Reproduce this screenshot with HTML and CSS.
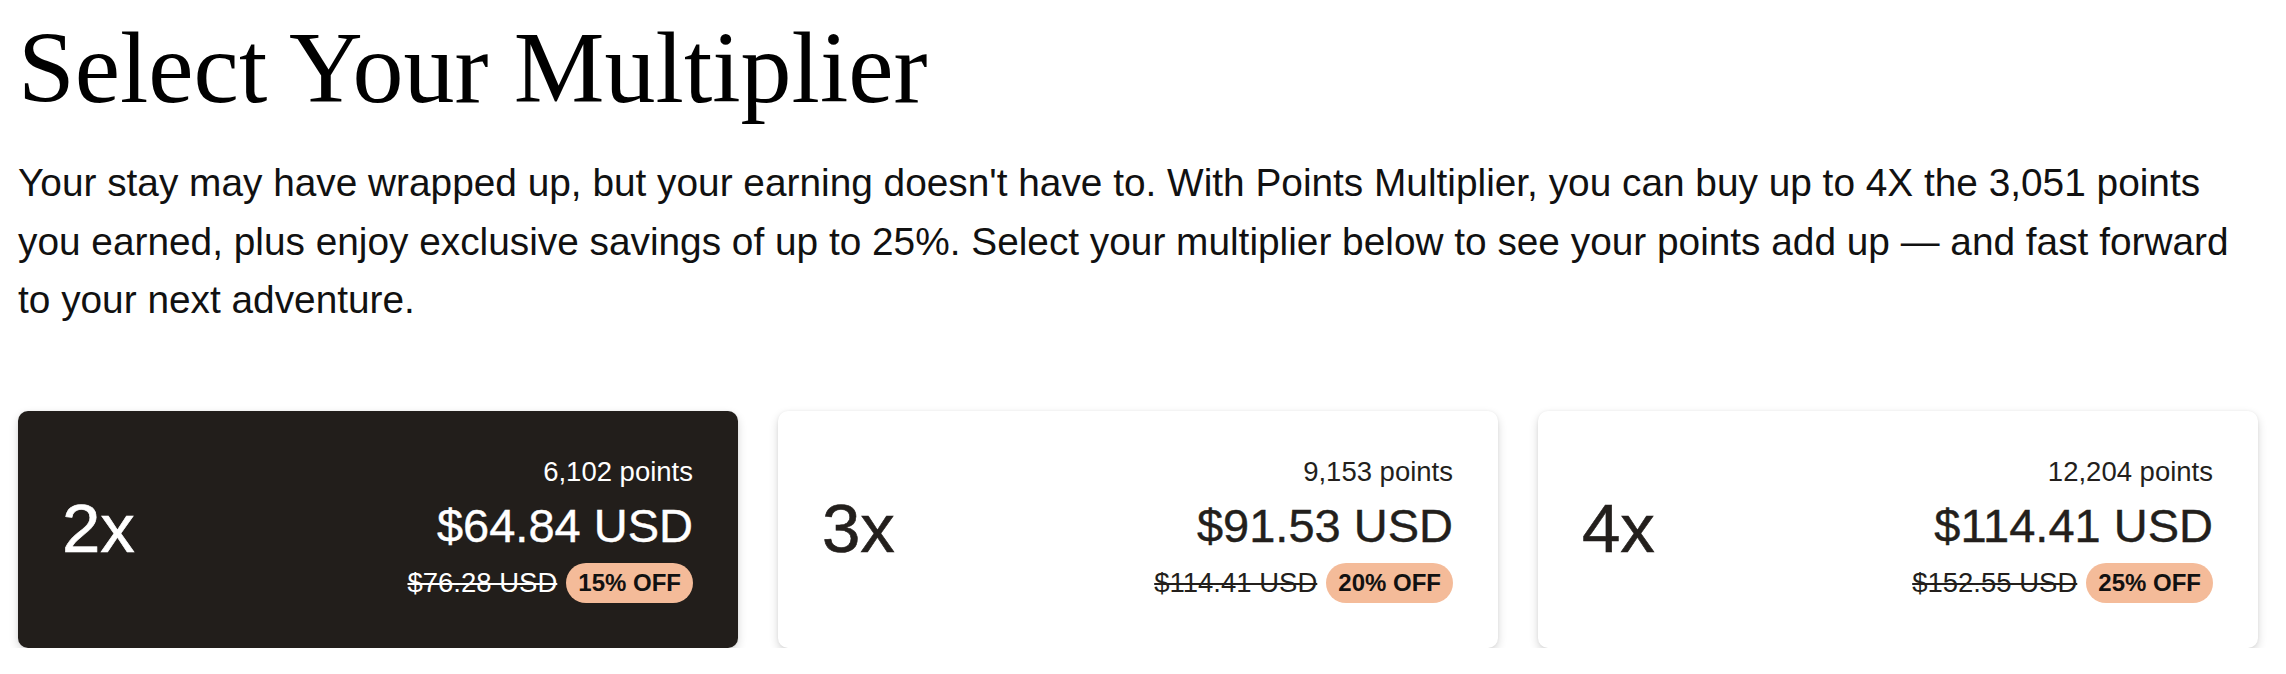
FILE: index.html
```html
<!DOCTYPE html>
<html lang="en">
<head>
<meta charset="utf-8">
<title>Select Your Multiplier</title>
<link rel="stylesheet" href="styles.css">
</head>
<body>
<main class="page">
  <h1 class="title">Select Your Multiplier</h1>
  <p class="intro">Your stay may have wrapped up, but your earning doesn't have to. With Points Multiplier, you can buy up to 4X the 3,051 points you earned, plus enjoy exclusive savings of up to 25%. Select your multiplier below to see your points add up — and fast forward to your next adventure.</p>
  <div class="options">
    <div class="card card--selected">
      <div class="mult">2x</div>
      <div class="pricing">
        <div class="points">6,102 points</div>
        <div class="price">$64.84 USD</div>
        <div class="deal">
          <span class="was">$76.28 USD</span>
          <span class="badge">15% OFF</span>
        </div>
      </div>
    </div>
    <div class="card">
      <div class="mult">3x</div>
      <div class="pricing">
        <div class="points">9,153 points</div>
        <div class="price">$91.53 USD</div>
        <div class="deal">
          <span class="was">$114.41 USD</span>
          <span class="badge">20% OFF</span>
        </div>
      </div>
    </div>
    <div class="card">
      <div class="mult">4x</div>
      <div class="pricing">
        <div class="points">12,204 points</div>
        <div class="price">$114.41 USD</div>
        <div class="deal">
          <span class="was">$152.55 USD</span>
          <span class="badge">25% OFF</span>
        </div>
      </div>
    </div>
  </div>
</main>
</body>
</html>
```

FILE: styles.css
```css
html, body {
  margin: 0;
  padding: 0;
  background: #ffffff;
}

.page {
  width: 2240px;
  padding: 8px 0 0 18px;
  font-family: "Liberation Sans", Arial, sans-serif;
  color: #111111;
}

.title {
  margin: 0;
  font-family: "Liberation Serif", "Times New Roman", serif;
  font-weight: 400;
  font-size: 102px;
  line-height: 120px;
  color: #000000;
}

.intro {
  margin: 26px 0 0 0;
  font-size: 38.8px;
  line-height: 58.5px;
  color: #111111;
}

.options {
  display: grid;
  grid-template-columns: repeat(3, 1fr);
  column-gap: 40px;
  margin-top: 81px;
}

.card {
  height: 237px;
  box-sizing: border-box;
  padding: 0 45px 0 44px;
  display: flex;
  align-items: center;
  justify-content: space-between;
  background: #ffffff;
  color: #231f1c;
  border-radius: 10px;
  box-shadow: 0 4px 10px rgba(0, 0, 0, 0.16), 0 0 3px rgba(0, 0, 0, 0.06);
}

.card--selected {
  background: #221e1b;
  color: #ffffff;
}

.mult {
  font-size: 69px;
  line-height: 80px;
  -webkit-text-stroke: 0.6px currentColor;
}

.pricing {
  display: flex;
  flex-direction: column;
  align-items: flex-end;
}

.points {
  font-size: 27.5px;
  line-height: 33px;
}

.price {
  margin-top: 10px;
  font-size: 47px;
  line-height: 56px;
  -webkit-text-stroke: 0.4px currentColor;
}

.deal {
  margin-top: 9px;
  display: flex;
  align-items: center;
  gap: 9px;
  height: 40px;
}

.was {
  font-size: 27.5px;
  line-height: 40px;
  text-decoration: line-through;
  text-decoration-thickness: 2px;
}

.badge {
  height: 40px;
  box-sizing: border-box;
  padding: 0 12px;
  display: flex;
  align-items: center;
  border-radius: 20px;
  background: #f4bb99;
  color: #111111;
  font-size: 24px;
  font-weight: 700;
}
```
